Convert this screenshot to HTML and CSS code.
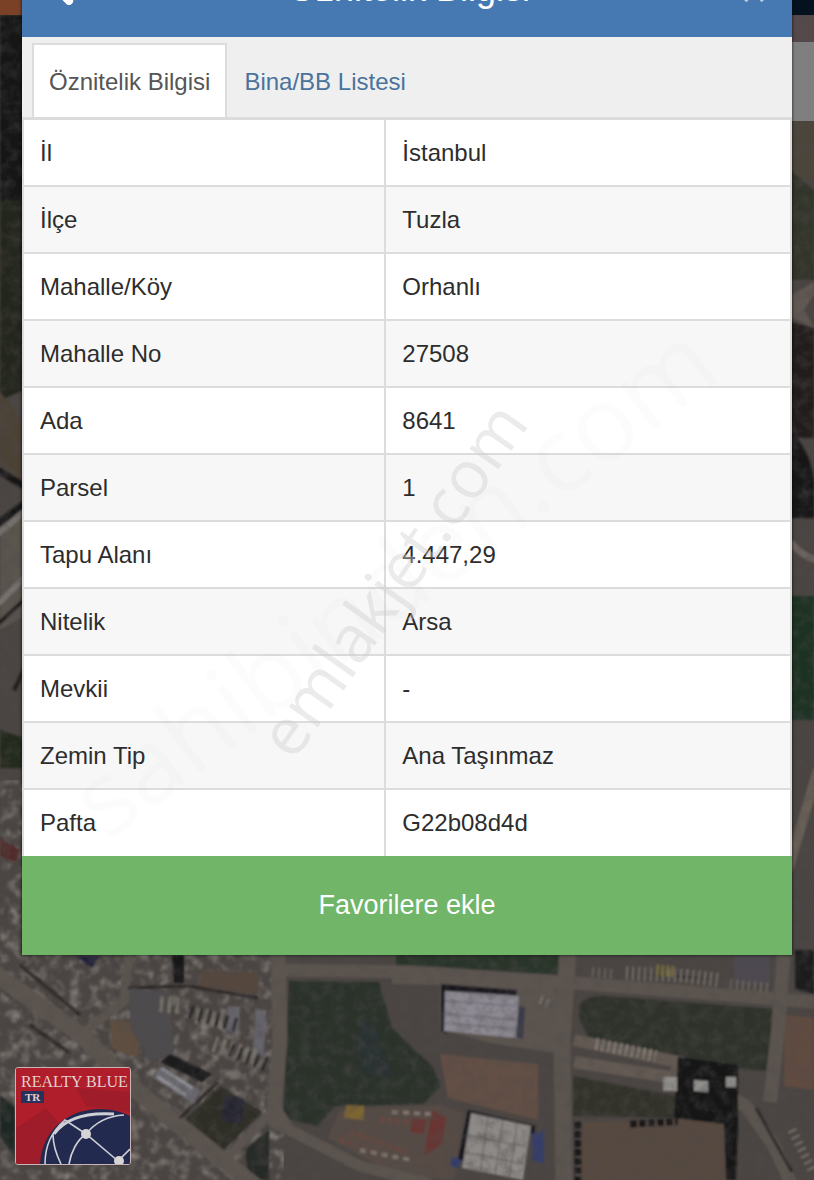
FILE: index.html
```html
<!DOCTYPE html>
<html lang="tr">
<head>
    <meta charset="UTF-8">
    <meta name="viewport" content="width=device-width, initial-scale=1.0">
    <title>Öznitelik Bilgisi</title>
    <link rel="stylesheet" href="styles.css">
</head>
<body>
    <div class="screen">
        <!-- Satellite map behind the dialog -->
        <svg class="map" viewBox="0 0 814 1180" preserveAspectRatio="xMidYMax slice" aria-hidden="true">
            <defs>
                <filter id="soft" x="-5%" y="-5%" width="110%" height="110%">
                    <feGaussianBlur stdDeviation="1"/>
                </filter>
                <filter id="grain" x="0" y="0" width="100%" height="100%">
                    <feTurbulence type="fractalNoise" baseFrequency="0.09" numOctaves="4" seed="8"/>
                    <feColorMatrix values="0 0 0 0 0.08  0 0 0 0 0.07  0 0 0 0 0.07  1.7 0 0 0 -0.65"/>
                    <feGaussianBlur stdDeviation="0.7"/>
                </filter>
                <filter id="rubble" x="0" y="0" width="100%" height="100%">
                    <feTurbulence type="fractalNoise" baseFrequency="0.1" numOctaves="3" seed="21"/>
                    <feColorMatrix values="0 0 0 0 0.46  0 0 0 0 0.42  0 0 0 0 0.39  0 2 0 0 -0.9"/>
                    <feGaussianBlur stdDeviation="1"/>
                </filter>
            </defs>
            <rect width="814" height="1180" fill="#4a4542"/>
            <path d="M0 780h22v170h262l-6 230H0z" filter="url(#rubble)" opacity=".7"/>
            <g filter="url(#soft)">
                <!-- left edge -->
                <path fill="#191617" d="M0 15h24v185H0z"/>
                <path fill="#24261f" d="M0 200h24v190L0 400z"/>
                <path fill="#4c4235" d="M0 392l24 30v60L0 465z"/>
                <path fill="#5a554e" d="M0 520l24-14v110L0 630z"/>
                <path stroke="#171616" stroke-width="7" d="M-2 470l26 16M-2 524l26-20"/>
                <path stroke="#77736f" stroke-width="6" d="M-2 534l26-22M-2 604l26-26"/>
                <path stroke="#201d1c" stroke-width="4" d="M-2 624l26-24M14 690l10-20"/>
                <path fill="#23291f" d="M0 730l24 8v30H0z"/>
                <path fill="#522a2b" d="M0 838l20 12-4 12-16-6z"/>
                <!-- right edge -->
                <path fill="#554a4b" d="M790 15h24v30h-24z"/>
                <path fill="#4b443b" d="M790 120h24v60h-24z"/>
                <path fill="#33342a" d="M790 170l24 20v90h-24z"/>
                <path fill="#625952" d="M790 296l24-14v12l-10 16 10 18-24-12z"/>
                <path fill="#201e1c" d="M790 322l24 6v110h-24z"/>
                <path fill="#141414" d="M790 430q20 20 24 50v38h-24z"/>
                <path fill="none" stroke="#6c645e" stroke-width="7" d="M790 542q12 14 26 18"/>
                <path fill="#1f3022" d="M790 596h24v124h-24z"/>
                <path stroke="#675f57" stroke-width="10" d="M788 870l30-100"/>
                <!-- fields -->
                <path fill="#2b312a" d="M289 981l90 1 13 46q20 20 40 38l9 20-18 18-88 2-18 20-34-8z"/>
                <path fill="#2e3039" opacity=".55" d="M360 1020q20 0 22 30l14 28-30-4q-16-20-6-54z"/>
                <path fill="#2c342a" d="M396 955h164v20l-164-7z"/>
                <path fill="#2d332b" d="M580 1004q6-8 24-8l170 13-6 62-30-2-60-12-90-20q-12-20-8-33z"/>
                <path fill="#31312b" d="M573 1076l104 20v22l-104-2z"/>
                <path fill="#2e2f27" d="M180 1124l40-38 42 26-40 40-20-6z"/>
                <path fill="#252234" opacity=".7" d="M225 1095l20 4-4 26-20-4z"/>
                <path fill="#262a25" d="M245 1150l24-20v50h-20z"/>
                <path fill="#1c1d1c" d="M795 950h19v44l-19-5z"/>
                <path fill="#1d2721" d="M0 1095l15 12v50l-15-20z"/>
                <!-- bare ground -->
                <path fill="#635044" d="M440 1054l98 10v56l-90-22z"/>
                <path fill="#604c40" d="M785 1015l29 3v72l-30-4z"/>
                <path fill="#57493f" d="M582 1122l144-4v62H576z"/>
                <path fill="#564c45" d="M340 1110l100-5 24 8-10 67-60-6-66-36z"/>
                <path fill="#55473d" d="M202 970l56 2v22l-60-6z"/>
                <path fill="#60503f" d="M110 1020l34 4-8 34-24-10z"/>
                <path fill="#5b5450" d="M392 984l48 1v44l50 14 66 10v-66l-40-8-124-8z"/>
                <!-- roads -->
                <g fill="none" stroke="#5c5550">
                    <path stroke-width="15" d="M278 950l2 90-6 70 12 18"/>
                    <path stroke-width="13" d="M282 970l130 2 150 10 252 20"/>
                    <path stroke-width="17" d="M568 950l-6 90 2 150"/>
                    <path stroke-width="17" d="M-10 970l90 64 60 60 120 96"/>
                    <path stroke-width="9" d="M82 1034l42-34 6-60"/>
                    <path stroke-width="14" d="M784 950l-6 80-8 72"/>
                    <path stroke-width="13" d="M690 1076l56 30 28 40 20 44"/>
                    <path stroke-width="11" d="M270 1120l90 46 70 18"/>
                    <path stroke-width="9" d="M272 1112l-50 50"/>
                    <path stroke-width="12" stroke="#645a53" d="M574 1040l104 22-2 16-102-16"/>
                </g>
                <path stroke="#2a2725" stroke-width="3" fill="none" d="M20 965l60 50M128 988l60-2 70 12M180 1118l38-36M756 1108l36 64M30 1025l40 28"/>
                <!-- buildings -->
                <path fill="#19181b" d="M441 984l76 6-2 14-68-10v40l-6-4z"/>
                <path fill="#8d8a93" d="M445 991l74 5-3 42-72-7z"/>
                <path stroke="#77757f" stroke-width="2" d="M445 1001l72 5M444 1014l72 6M445 1023l71 6"/>
                <path fill="#3b3a49" d="M519 1006l6 1-2 32-7-2z"/>
                <path fill="#17171c" d="M468 1110l68 16-2 8-62-12-8 40-6-2z"/>
                <path fill="#8d8a87" d="M471 1113l60 13-8 54-61-12z"/>
                <path stroke="#5d5b5d" stroke-width="1" d="M488 1117l-8 56M503 1120l-8 56M517 1123l-8 56M467 1135l60 12M464 1152l60 12"/>
                <path fill="#343d6a" d="M532 1134l12-4v34l-12-4zM452 1156l10 4-4 8-8-2z"/>
                <path fill="#4e4b4d" d="M130 988l38 4 6 62-24 8-20-34z"/>
                <path fill="#1c1b1c" d="M160 1062l10-8 42 20-10 8z"/>
                <path fill="#6d6d73" d="M160 1066l40 24-6 14-40-26z"/>
                <path stroke="#929298" stroke-width="3" d="M162 1068l30 20M158 1077l28 18"/>
                <path fill="#66656c" d="M228 1006l12 2-2 26-12-4zM256 1009l10 2-2 46-12-2z"/>
                <path fill="#23243a" d="M76 956h24l-8 12z"/>
                <path fill="#4e4a51" d="M734 955h36v30h-36z"/>
                <!-- containers and trucks -->
                <path stroke="#77716b" stroke-width="14" stroke-dasharray="2 4" d="M626 973l60 3 32 4"/>
                <path stroke="#7b6f3d" stroke-width="11" stroke-dasharray="3 2" d="M656 970l20 2"/>
                <path stroke="#6b665e" stroke-width="10" stroke-dasharray="2 4" d="M592 972l20 2M730 984l40 4"/>
                <path stroke="#87817a" stroke-width="12" stroke-dasharray="2 4" d="M596 1044l60 12"/>
                <path stroke="#7a746c" stroke-width="16" stroke-dasharray="3 5" d="M160 1004l22 2M196 1016l30 6M214 1044l44 14"/>
                <path stroke="#282627" stroke-width="14" stroke-dasharray="3 6" d="M190 1012l50 14M230 1050l40 16"/>
                <path stroke="#7d7770" stroke-width="9" stroke-dasharray="2 5" d="M540 1000l10 4M792 1130l20 40"/>
                <path fill="#7d6530" d="M346 1105l18 1v14l-20-2z"/>
                <path fill="#6a3630" d="M412 1118l14 2-2 14-14-2zM432 1110l14 8-4 26-18 12 4-24z"/>
                <path stroke="#6b4740" stroke-width="5" stroke-dasharray="4 4" d="M350 1132l56 20M380 1120l30 2M340 1140l40 14"/>
                <path stroke="#807670" stroke-width="4" stroke-dasharray="6 5" d="M392 1112l40 2M360 1150l50 10"/>
                <!-- trees -->
                <path fill="#141618" d="M678 1057l60 8v58l-2 57h-10l-2-56-50-6z"/>
                <path stroke="#191919" stroke-width="7" stroke-dasharray="7 2" d="M630 1124l48-2M578 1122v60"/>
                <path fill="#918f8c" d="M663 1077h14v14h-14zM694 1080l14 1v11l-14-1zM726 1077h10v10h-10z"/>
                <path fill="#151616" d="M172 955h12v28h-10z"/>
            </g>
            <rect width="814" height="1180" filter="url(#grain)" opacity=".5"/>
            <!-- page bars left visible around the dialog -->
            <path fill="#7b4126" d="M0 0h22v15H0z"/>
            <path fill="#04121f" d="M792 0h22v15h-22z"/>
            <path fill="#7f7f7f" d="M792 42h22v79h-22z"/>
        </svg>

        <main class="dialog">
            <header class="dialog-header">
                <button class="icon-btn" type="button" aria-label="Geri">
                    <svg width="32" height="32" viewBox="0 0 32 32"><path d="M23 4L11 16l12 12" fill="none" stroke="#fff" stroke-width="8" stroke-linecap="round" stroke-linejoin="round"/></svg>
                </button>
                <h1>Öznitelik Bilgisi</h1>
                <button class="icon-btn" type="button" aria-label="Kapat">
                    <svg width="28" height="28" viewBox="0 0 28 28"><path d="M5 5l18 21M23 5L5 26" fill="none" stroke="#b9cbe0" stroke-width="4"/></svg>
                </button>
            </header>

            <nav class="tabs">
                <a class="tab active" href="#oznitelik">Öznitelik Bilgisi</a>
                <a class="tab" href="#bina">Bina/BB Listesi</a>
            </nav>

            <table class="info" id="oznitelik">
                <tbody>
                    <tr><th scope="row">İl</th><td>İstanbul</td></tr>
                    <tr><th scope="row">İlçe</th><td>Tuzla</td></tr>
                    <tr><th scope="row">Mahalle/Köy</th><td>Orhanlı</td></tr>
                    <tr><th scope="row">Mahalle No</th><td>27508</td></tr>
                    <tr><th scope="row">Ada</th><td>8641</td></tr>
                    <tr><th scope="row">Parsel</th><td>1</td></tr>
                    <tr><th scope="row">Tapu Alanı</th><td>4.447,29</td></tr>
                    <tr><th scope="row">Nitelik</th><td>Arsa</td></tr>
                    <tr><th scope="row">Mevkii</th><td>-</td></tr>
                    <tr><th scope="row">Zemin Tip</th><td>Ana Taşınmaz</td></tr>
                    <tr><th scope="row">Pafta</th><td>G22b08d4d</td></tr>
                </tbody>
            </table>

            <button class="favorite-btn" type="button">Favorilere ekle</button>
        </main>

        <div class="watermarks">
            <span class="watermark-large">sahibinden.com</span>
            <span class="watermark">emlakjet.com</span>
        </div>

        <div class="agency">
            <svg class="globe" viewBox="0 0 114 96" preserveAspectRatio="none" aria-hidden="true">
                <path fill="#b01e2b" d="M0 0h114v96H0z"/>
                <path fill="#86192a" opacity=".4" d="M0 60l30-20 14 16-20 40H0zM60 20l54 4v20L70 38z"/>
                <path fill="#232a50" d="M24 96C26 62 52 41 84 41q17 0 30 7v48z"/>
                <g fill="none" stroke="#cfcfd6" stroke-width="1.6">
                    <path d="M29 96c0-20 8-34 20-44l21 14 32 27M49 52l-12 14c0 12 4 22 8 30M53 96c2-12 8-24 17-30 8-10 20-18 38-19M102 93l12-12"/>
                    <path stroke-width="3" d="M38 66c10-14 28-22 60-20"/>
                </g>
                <circle cx="70" cy="66" r="5" fill="#d5d4d6"/>
                <circle cx="103" cy="93" r="5" fill="#d5d4d6"/>
            </svg>
            <span class="agency-name">REALTY BLUE</span>
            <span class="agency-country">TR</span>
        </div>
    </div>
</body>
</html>
```

FILE: styles.css
```css
:root {
    --header: #4678b2;
    --link: #4a739c;
    --green: #70b568;
    --line: #dcdcdc;
    --text: #2d2d2d;
}

* {
    box-sizing: border-box;
}

body {
    margin: 0;
    font-family: "Liberation Sans", Arial, sans-serif;
    font-size: 24px;
    color: var(--text);
}

.screen {
    position: relative;
    min-height: 100vh;
    overflow: hidden;
    background: #4a4542;
}

.map {
    position: absolute;
    top: 0;
    left: 0;
    width: 100%;
    height: 100%;
}

/* Dialog is scrolled up, so the header starts above the window */
.dialog {
    position: relative;
    margin: -60px 22px 0;
    background: #fff;
    box-shadow: 0 0 3px rgba(0, 0, 0, 0.8);
}

.dialog-header {
    display: flex;
    align-items: center;
    justify-content: space-between;
    height: 97px;
    padding: 0 24px;
    background: var(--header);
    color: #fff;
}

.dialog-header h1 {
    margin: 0;
    font-size: 36px;
    font-weight: normal;
    line-height: 44px;
}

.icon-btn {
    display: flex;
    padding: 0;
    border: none;
    background: none;
    cursor: pointer;
}

.tabs {
    display: flex;
    padding: 6px 10px 0;
    background: #efeff0;
    border-bottom: 3px solid var(--line);
}

.tab {
    height: 74px;
    padding: 0 15px;
    border: 2px solid transparent;
    border-bottom: none;
    line-height: 74px;
    color: var(--link);
    text-decoration: none;
}

.tab.active {
    border-color: var(--line);
    background: #fff;
    color: #555;
}

.info {
    width: 100%;
    border-collapse: separate;
    border-spacing: 0;
    table-layout: fixed;
    border-left: 2px solid var(--line);
    border-right: 2px solid var(--line);
}

.info th,
.info td {
    height: 67px;
    padding: 0 16px;
    border-bottom: 2px solid var(--line);
    font-weight: normal;
    text-align: left;
}

.info th {
    width: 47.3%;
    border-right: 2px solid var(--line);
}

.info tr:nth-child(even) {
    background: #f7f7f7;
}

.info tr:last-child th,
.info tr:last-child td {
    height: 66px;
    border-bottom: none;
}

.favorite-btn {
    display: block;
    width: 100%;
    height: 99px;
    border: none;
    background: var(--green);
    color: #fff;
    font-family: inherit;
    font-size: 27px;
    cursor: pointer;
}

.watermarks {
    position: absolute;
    inset: 0;
    display: grid;
    place-items: center;
    padding: 0 32px 24px 0;
    overflow: hidden;
    pointer-events: none;
}

.watermarks span {
    grid-area: 1 / 1;
    white-space: nowrap;
    line-height: 1;
}

.watermark {
    font-family: "Open Sans", sans-serif;
    font-size: 66px;
    color: rgba(205, 205, 205, 0.4);
    transform: rotate(-55deg);
}

.watermark-large {
    font-family: "Open Sans", sans-serif;
    font-size: 104px;
    color: rgba(120, 120, 120, 0.02);
    transform: rotate(-37deg);
}

.agency {
    position: absolute;
    left: 15px;
    bottom: 15px;
    display: flex;
    flex-direction: column;
    align-items: flex-start;
    width: 116px;
    height: 98px;
    padding: 5px;
    border: 1px solid #c9b5b5;
    border-radius: 3px;
    overflow: hidden;
    font-family: "Liberation Serif", serif;
    color: #e3cfd0;
}

.globe {
    position: absolute;
    top: 0;
    left: 0;
    width: 100%;
    height: 100%;
}

.agency-name {
    position: relative;
    font-size: 16px;
    line-height: 18px;
    white-space: nowrap;
}

.agency-country {
    position: relative;
    padding: 0 4px;
    background: #27325c;
    font-size: 11px;
    font-weight: bold;
    line-height: 12px;
}
```
